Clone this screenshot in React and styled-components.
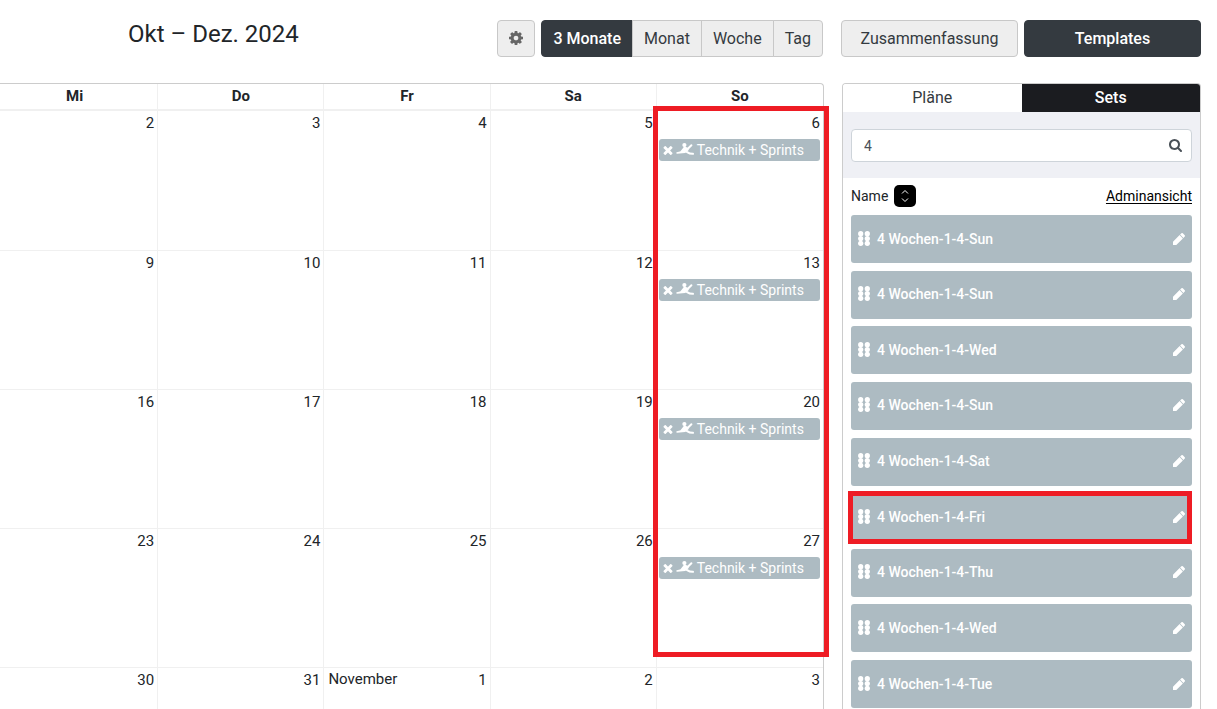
import React, { useState } from "react";
import styled, { createGlobalStyle } from "styled-components";

const GlobalStyle = createGlobalStyle`
  * {
    box-sizing: border-box;
  }
  body {
    margin: 0;
    background: #fff;
    color: #212529;
    font-family: Roboto, "Liberation Sans", sans-serif;
    font-size: 14px;
  }
  button, input {
    font-family: inherit;
  }
`;

const Page = styled.div`
  display: flex;
  gap: 17px;
  height: 100vh;
  padding-right: 16px;
  overflow: hidden;
`;

const Main = styled.main`
  flex: 1;
  min-width: 0;
`;

const Toolbar = styled.div`
  display: flex;
  justify-content: space-between;
  align-items: flex-start;
  height: 83px;
  padding: 20px 1px 0 0;
`;

const Title = styled.h2`
  margin: 0;
  padding-left: 128px;
  font-size: 24px;
  line-height: 28px;
  font-weight: 400;
`;

const Buttons = styled.div`
  display: flex;
  gap: 6px;
`;

const ButtonGroup = styled.div`
  display: flex;

  & > button {
    border-radius: 0;
    margin-left: -1px;
  }
  & > button:first-child {
    border-radius: 4px 0 0 4px;
    margin-left: 0;
  }
  & > button:last-child {
    border-radius: 0 4px 4px 0;
  }
`;

const Button = styled.button`
  display: flex;
  flex: ${({ $grow }) => ($grow ? "1 1 0" : "none")};
  align-items: center;
  justify-content: center;
  height: 37px;
  padding: 0 11px 1px;
  border: 1px solid ${({ $active }) => ($active ? "#343a40" : "#c8c8c8")};
  border-radius: 4px;
  background: ${({ $active }) => ($active ? "#343a40" : "#eee")};
  color: ${({ $active }) => ($active ? "#fff" : "#343a40")};
  font-size: 16px;
  font-weight: ${({ $active }) => ($active ? 500 : 400)};
  cursor: pointer;
`;

const Calendar = styled.div`
  position: relative;
`;

const Clip = styled.div`
  overflow: hidden;
  border: solid #ccc;
  border-width: 1px 1px 0 0;
  border-top-right-radius: 4px;
`;

const Table = styled.table`
  width: calc(100% + 8px);
  margin-left: -8px;
  table-layout: fixed;
  border-collapse: separate;
  border-spacing: 0;

  tbody tr:first-child td {
    height: 140px;
  }
`;

const HeadCell = styled.th`
  height: 27px;
  padding: 0 0 2px;
  border-right: 1px solid #f0f0f0;
  border-bottom: 2px solid #f0f0f0;
  font-size: 15px;
  font-weight: 700;

  &:last-child {
    border-right: 0;
  }
`;

const DayCell = styled.td`
  height: 139px;
  padding: 2px 3px 0 2px;
  border-right: 1px solid #f0f0f0;
  border-bottom: 1px solid #f0f0f0;
  vertical-align: top;

  &:last-child {
    border-right: 0;
  }
`;

const DayTop = styled.div`
  display: flex;
  justify-content: space-between;
  line-height: 20px;
  font-size: 15px;
`;

const Month = styled.span`
  padding-left: 2px;
  line-height: 18px;
`;

const DayNumber = styled.span`
  margin-left: auto;
`;

const Event = styled.div`
  display: flex;
  align-items: center;
  gap: 3px;
  height: 22px;
  margin-top: 6px;
  padding-left: 4px;
  border-radius: 3px;
  background: #adbbc2;
  color: #fff;
  font-size: 14px;
  white-space: nowrap;
`;

const IconButton = styled.button`
  display: flex;
  padding: 0;
  border: 0;
  background: none;
  color: inherit;
  cursor: pointer;
`;

const SundayMark = styled.div`
  position: absolute;
  top: 23px;
  right: -5px;
  width: calc((100% + 8px) / 5 + 10px);
  height: 551px;
  border: 5px solid #ee1c24;
  pointer-events: none;
`;

const Side = styled.aside`
  display: flex;
  flex-direction: column;
  flex: 0 0 360px;
`;

const SideButtons = styled.div`
  display: flex;
  gap: 6px;
  height: 83px;
  padding-top: 20px;
`;

const Panel = styled.section`
  display: flex;
  flex: 1;
  flex-direction: column;
  min-height: 0;
  margin-left: 1px;
  border: solid #ccc;
  border-width: 1px 1px 0;
  border-radius: 4px 4px 0 0;
  overflow: hidden;
`;

const Tabs = styled.div`
  display: flex;
`;

const Tab = styled.button`
  flex: 1;
  height: 28px;
  padding: 0 0 1px;
  border: 0;
  background: ${({ $active }) => ($active ? "#1b1c20" : "#fff")};
  color: ${({ $active }) => ($active ? "#fff" : "#343a40")};
  font-size: 16px;
  font-weight: ${({ $active }) => ($active ? 500 : 400)};
  cursor: pointer;
`;

const SearchArea = styled.div`
  padding: 17px 8px 16px;
  background: #eff0f5;
`;

const SearchBox = styled.label`
  display: flex;
  align-items: center;
  height: 33px;
  padding: 0 9px 0 12px;
  border: 1px solid #ced4da;
  border-radius: 4px;
  background: #fff;
  color: #495057;
`;

const SearchInput = styled.input`
  flex: 1;
  min-width: 0;
  padding: 0;
  border: 0;
  outline: 0;
  background: none;
  color: inherit;
  font-size: 14px;
`;

const SortRow = styled.div`
  display: flex;
  align-items: center;
  gap: 6px;
  height: 37px;
  padding: 0 8px 2px;
  font-size: 14px;
`;

const SortButton = styled(IconButton)`
  align-items: center;
  justify-content: center;
  width: 22px;
  height: 22px;
  border-radius: 5px;
  background: #000;
  color: #fff;
`;

const AdminLink = styled.a`
  margin-left: auto;
  color: #000;
  text-decoration: underline;
  text-underline-offset: 2px;
`;

const SetList = styled.ul`
  display: flex;
  flex: 1;
  flex-direction: column;
  justify-content: space-between;
  margin: 0;
  padding: 0 8px 1px;
  list-style: none;
`;

const SetItem = styled.li`
  position: relative;
  display: flex;
  align-items: center;
  gap: 7px;
  height: 48px;
  padding: 0 7px 1px;
  border-radius: 3px;
  background: #adbbc2;
  color: #fff;
  font-size: 14px;
  font-weight: 500;

  & > button {
    margin-left: auto;
  }
`;

const ItemMark = styled.div`
  position: absolute;
  inset: -2px 0 -3px -3px;
  border: 5px solid #ee1c24;
  pointer-events: none;
`;

const CogIcon = () => (
    <svg width="14" height="14" viewBox="0 -128 1536 1536" fill="#666" fillRule="evenodd" aria-hidden="true">
        <path d="M1024 640q0 106-75 181t-181 75-181-75-75-181 75-181 181-75 181 75 75 181zm512-109v222q0 12-8 23t-20 13l-185 28q-19 54-39 91 35 50 107 138 10 12 10 25t-9 23q-27 37-99 108t-94 71q-12 0-26-9l-138-108q-44 23-91 38-16 136-29 186-7 28-36 28h-222q-14 0-24.5-8.5t-11.5-21.5l-28-184q-49-16-90-37l-141 107q-10 9-25 9-14 0-25-11-126-114-165-168-7-10-7-23 0-12 8-23 15-21 51-66.5t54-70.5q-27-50-41-99l-183-27q-13-2-21-12.5t-8-23.5v-222q0-12 8-23t19-13l186-28q14-46 39-92-40-57-107-138-10-12-10-24 0-10 9-23 26-36 98.5-107.5t94.5-71.5q13 0 26 10l138 107q44-23 91-38 16-136 29-186 7-28 36-28h222q14 0 24.5 8.5t11.5 21.5l28 184q49 16 90 37l142-107q9-9 24-9 13 0 25 10 129 119 165 170 7 8 7 22 0 12-8 23-15 21-51 66.5t-54 70.5q26 50 41 98l183 28q13 2 21 12.5t8 23.5z" />
    </svg>
);

const TimesIcon = () => (
    <svg width="10" height="10" viewBox="240 240 1312 1312" fill="currentColor" aria-hidden="true">
        <path d="M1490 1322q0 40-28 68l-136 136q-28 28-68 28t-68-28l-294-294-294 294q-28 28-68 28t-68-28l-136-136q-28-28-28-68t28-68l294-294-294-294q-28-28-28-68t28-68l136-136q28-28 68-28t68 28l294 294 294-294q28-28 68-28t68 28l136 136q28 28 28 68t-28 68l-294 294 294 294q28 28 28 68z" />
    </svg>
);

const SwimIcon = () => (
    <svg width="18" height="16" viewBox="0 0 18 16" fill="none" stroke="currentColor" strokeLinecap="round" strokeLinejoin="round" aria-hidden="true">
        <circle cx="8.4" cy="3" r="2.1" fill="currentColor" stroke="none" />
        <path d="M15.4 3.2 11.6 7 8.4 5" strokeWidth="2" />
        <path d="M1 11 5 9.8 8 6 12 7.6 9 10.2Z" fill="currentColor" strokeWidth="1.4" />
        <path d="M9 9C11.4 9.6 12 12 17 11.8" strokeWidth="2" />
    </svg>
);

const SearchIcon = () => (
    <svg width="13" height="13" viewBox="64 128 1664 1664" fill="currentColor" aria-hidden="true">
        <path d="M1216 832q0-185-131.5-316.5t-316.5-131.5-316.5 131.5-131.5 316.5 131.5 316.5 316.5 131.5 316.5-131.5 131.5-316.5zm512 832q0 52-38 90t-90 38q-54 0-90-38l-343-342q-179 124-399 124-143 0-273.5-55.5t-225-150-150-225-55.5-273.5 55.5-273.5 150-225 225-150 273.5-55.5 273.5 55.5 225 150 150 225 55.5 273.5q0 220-124 399l343 343q37 37 37 90z" />
    </svg>
);

const PencilIcon = () => (
    <svg width="12" height="12" viewBox="128 149 1515 1515" fill="currentColor" aria-hidden="true">
        <path d="M960 416l416 416-832 832h-416v-416zm683 96q0 53-37 90l-166 166-416-416 166-165q36-38 90-38 53 0 91 38l235 234q37 39 37 91z" />
    </svg>
);

const SortIcon = () => (
    <svg width="8" height="14" viewBox="0 0 8 14" fill="none" stroke="currentColor" aria-hidden="true">
        <path d="M1 4.5 4 1.5 7 4.5M1 9.5 4 12.5 7 9.5" />
    </svg>
);

const GripIcon = () => (
    <svg width="12" height="16" viewBox="0 0 12 16" fill="currentColor" aria-hidden="true">
        {[2.7, 7.5, 12.3].map(y => (
            <React.Fragment key={y}>
                <circle cx="2.7" cy={y} r="2.6" />
                <circle cx="9.3" cy={y} r="2.6" />
            </React.Fragment>
        ))}
    </svg>
);

const views = ["3 Monate", "Monat", "Woche", "Tag"];
const weekdays = ["Mi", "Do", "Fr", "Sa", "So"];
const weeks = [
    { days: [2, 3, 4, 5, 6], event: "Technik + Sprints" },
    { days: [9, 10, 11, 12, 13], event: "Technik + Sprints" },
    { days: [16, 17, 18, 19, 20], event: "Technik + Sprints" },
    { days: [23, 24, 25, 26, 27], event: "Technik + Sprints" },
    { days: [30, 31, 1, 2, 3] },
];
const sets = ["Sun", "Sun", "Wed", "Sun", "Sat", "Fri", "Thu", "Wed", "Tue"];

const App = () => {

    const [view, setView] = useState("3 Monate");
    const [tab, setTab] = useState("Sets");
    const [query, setQuery] = useState("4");

    return (
        <>
            <GlobalStyle />
            <Page>
                <Main>
                    <Toolbar>
                        <Title>Okt – Dez. 2024</Title>
                        <Buttons>
                            <Button aria-label="Einstellungen"><CogIcon /></Button>
                            <ButtonGroup>
                                {views.map(item => (
                                    <Button key={item} $active={item === view} onClick={() => setView(item)}>{item}</Button>
                                ))}
                            </ButtonGroup>
                        </Buttons>
                    </Toolbar>
                    <Calendar>
                        <Clip>
                            <Table>
                                <thead>
                                    <tr>
                                        {weekdays.map(day => <HeadCell key={day} scope="col">{day}</HeadCell>)}
                                    </tr>
                                </thead>
                                <tbody>
                                    {weeks.map(({ days, event }) => (
                                        <tr key={days[0]}>
                                            {days.map((day, index) => (
                                                <DayCell key={day}>
                                                    <DayTop>
                                                        {day === 1 && <Month>November</Month>}
                                                        <DayNumber>{day}</DayNumber>
                                                    </DayTop>
                                                    {event && index === 4 && (
                                                        <Event>
                                                            <IconButton aria-label="Entfernen"><TimesIcon /></IconButton>
                                                            <SwimIcon />
                                                            <span>{event}</span>
                                                        </Event>
                                                    )}
                                                </DayCell>
                                            ))}
                                        </tr>
                                    ))}
                                </tbody>
                            </Table>
                        </Clip>
                        <SundayMark />
                    </Calendar>
                </Main>
                <Side>
                    <SideButtons>
                        <Button $grow>Zusammenfassung</Button>
                        <Button $grow $active>Templates</Button>
                    </SideButtons>
                    <Panel>
                        <Tabs>
                            {["Pläne", "Sets"].map(item => (
                                <Tab key={item} $active={item === tab} onClick={() => setTab(item)}>{item}</Tab>
                            ))}
                        </Tabs>
                        <SearchArea>
                            <SearchBox>
                                <SearchInput aria-label="Suche" value={query} onChange={e => setQuery(e.target.value)} />
                                <SearchIcon />
                            </SearchBox>
                        </SearchArea>
                        <SortRow>
                            <span>Name</span>
                            <SortButton aria-label="Sortieren"><SortIcon /></SortButton>
                            <AdminLink href="#admin">Adminansicht</AdminLink>
                        </SortRow>
                        <SetList>
                            {sets.map((day, index) => (
                                <SetItem key={index}>
                                    <GripIcon />
                                    <span>4 Wochen-1-4-{day}</span>
                                    <IconButton aria-label="Bearbeiten"><PencilIcon /></IconButton>
                                    {day === "Fri" && <ItemMark />}
                                </SetItem>
                            ))}
                        </SetList>
                    </Panel>
                </Side>
            </Page>
        </>
    );
};

export default App;
